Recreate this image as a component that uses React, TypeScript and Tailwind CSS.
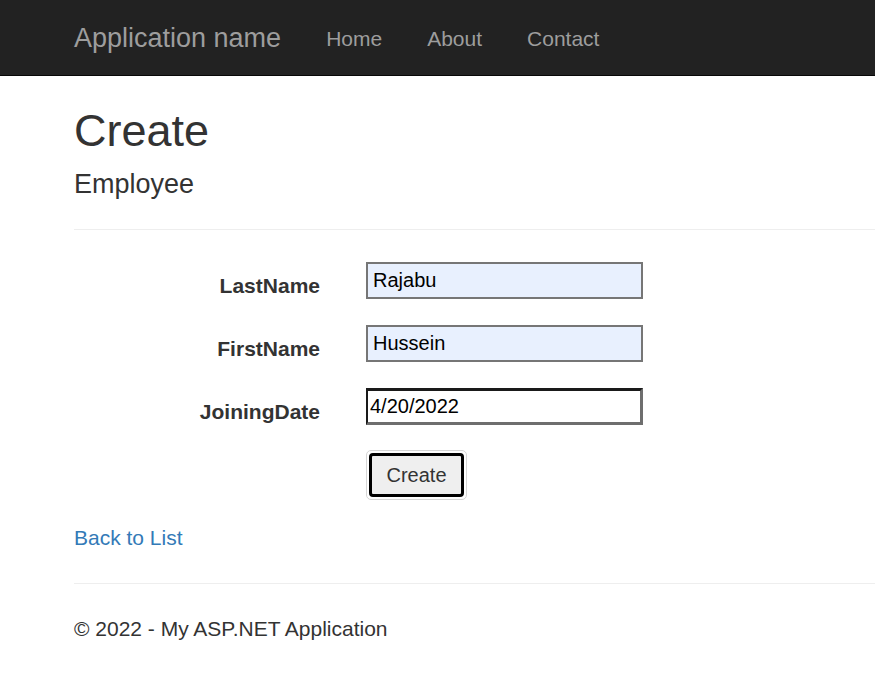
export default function App() {
  const fields = [
    { label: 'LastName', value: 'Rajabu', filled: true },
    { label: 'FirstName', value: 'Hussein', filled: true },
    { label: 'JoiningDate', value: '4/20/2022', filled: false },
  ];

  return (
    <div className="min-h-[688px] bg-white text-[#333] font-['Liberation_Sans',Arial,sans-serif] overflow-hidden">
      <nav className="h-[76px] bg-[#222] border-b border-[#080808] flex items-center pl-[74px] pt-[1px]">
        <span className="text-[27px] text-[#9d9d9d] leading-none">Application name</span>
        <div className="flex ml-[45px] gap-[45px] text-[21px] text-[#9d9d9d] leading-none">
          <a>Home</a>
          <a>About</a>
          <a>Contact</a>
        </div>
      </nav>

      <main className="pl-[74px]">
        <h2 className="text-[45px] leading-[1.1] mt-[30px] font-medium">Create</h2>
        <h4 className="text-[27px] leading-[1.1] mt-[14px] font-medium">Employee</h4>
        <hr className="mt-[30px] border-t border-[#eee]" />

        <form className="mt-[32px] flex flex-col gap-[26px]">
          {fields.map((f) => (
            <div key={f.label} className="flex items-start h-[37px]">
              <label className="w-[246px] text-right text-[21px] leading-[24px] font-bold mt-[12px]">{f.label}</label>
              <input
                readOnly
                value={f.value}
                className={
                  f.filled
                    ? 'ml-[46px] w-[277px] h-[37px] bg-[#e8f0fe] border-2 border-[#767676] px-[5px] text-[20px] text-black outline-none'
                    : 'ml-[46px] w-[277px] h-[37px] bg-white border-t-[3px] border-l-[2px] border-r-[3px] border-b-[3px] border-t-[#1a1a1a] border-l-[#1a1a1a] border-r-[#6e6e6e] border-b-[#6e6e6e] px-[2px] text-[20px] text-black outline-none'
                }
              />
            </div>
          ))}
          <div className="flex ml-[292px] -mt-[1px]">
            <div className="border border-[#d6d6d6] rounded-[5px] p-[2px]">
              <button type="button" className="w-[95px] h-[44px] bg-[#efefef] border-[3px] border-black rounded-[4px] text-[20px] text-[#333]">
                Create
              </button>
            </div>
          </div>
        </form>

        <div className="mt-[22px]">
          <a className="text-[21px] text-[#337ab7]">Back to List</a>
        </div>
        <hr className="mt-[29px] border-t border-[#eee]" />
        <footer className="mt-[29px]">
          <p className="text-[21px]">© 2022 - My ASP.NET Application</p>
        </footer>
      </main>
    </div>
  );
}
